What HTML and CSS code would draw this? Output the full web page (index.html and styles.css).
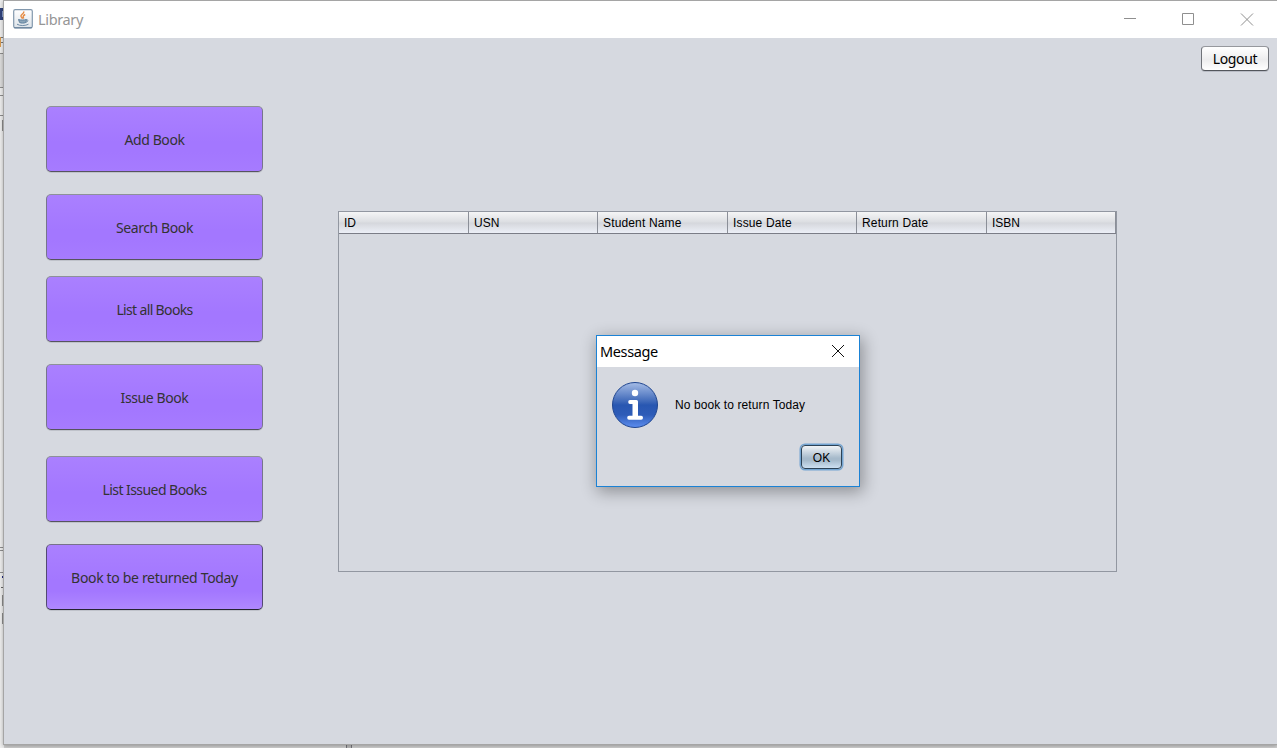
FILE: index.html
```html
<!DOCTYPE html>
<html lang="en">
<head>
<meta charset="utf-8">
<title>Library</title>
<link rel="stylesheet" href="styles.css">
</head>
<body>
<div class="desktop">
  <svg class="behind" width="4" height="748" viewBox="0 0 4 748" shape-rendering="crispEdges">
    <rect width="4" height="748" fill="#eeeeee"/>
    <rect y="8" width="4" height="12" fill="#31437c"/><rect x="2" y="11" width="2" height="6" fill="#8aa0d0"/>
    <rect y="37" width="1" height="10" fill="#d99a4e"/><rect x="1" y="37" width="3" height="1" fill="#777"/><rect x="1" y="42" width="2" height="1" fill="#777"/>
    <path d="M0 53.5h4M0 87.500h4M0 95.500h4M0 115.500h4M0 550.500h4M0 547.500h4M0 572.500h4" stroke="#8d8d8d"/>
    <rect y="54" width="4" height="33" fill="#dcdcdc"/>
    <path d="M4 120.500H2.500V130.500H4M4 595.500H2.500V605.500H4M4 613.500H2.500V623.500H4" fill="none" stroke="#8d8d8d"/>
    <rect x="3" y="561" width="1" height="4" fill="#c99b62"/><rect x="2" y="576" width="2" height="2" fill="#222a80"/><rect x="3" y="579" width="1" height="8" fill="#444"/><rect x="1" y="587" width="3" height="1" fill="#666"/>
  </svg>
  <div class="splitter"></div>
  <main class="window">
    <header class="titlebar">
      <svg class="java" width="20" height="20" viewBox="0 0 20 20">
        <defs><linearGradient id="jb" x1="0" y1="0" x2="0" y2="1"><stop offset="0" stop-color="#fff"/><stop offset="1" stop-color="#dde3e9"/></linearGradient></defs>
        <rect x=".7" y=".7" width="18.600" height="18.100" rx="1.500" fill="url(#jb)" stroke="#8298ad" stroke-width="1.200"/>
        <path d="M1 18.800h18" stroke="#617d97"/>
        <path d="M10.500 2.500c1.500 2-3.500 3-2.500 5 .4.900 1.200 1.300 1.500 2.200M12.200 5.500c-2.700 1.200-2.200 2.300-1.400 4" fill="none" stroke="#e58a42" stroke-width="1.400"/>
        <path d="M5.500 10.500c2 .7 5.500.7 8 0l-.7 3c-2 .8-4.500.8-6.200 0z" fill="#8da6ba" stroke="#5e809e"/>
        <path d="M13.400 11c2.200-.6 2.200 1.900-.7 2.200M4 15.200c3 1.900 8.500 1.700 11.500 0" fill="none" stroke="#6f8ca6"/>
      </svg>
      <span class="caption">Library</span>
      <svg class="controls" width="132" height="14" viewBox="0 0 132 14" fill="none" stroke="#8f8f8f">
        <path d="M0 5.500h12M58.500 .5h11v11h-11z"/><path d="M117 .5l12 12M129 .5l-12 12"/>
      </svg>
    </header>
    <div class="content">
      <nav class="menu">
        <button class="item">Add Book</button>
        <button class="item">Search Book</button>
        <button class="item near tight">List all Books</button>
        <button class="item">Issue Book</button>
        <button class="item far snug">List Issued Books</button>
        <button class="item active">Book to be returned Today</button>
      </nav>
      <section class="table">
        <div class="head"><span>ID</span><span>USN</span><span class="wide">Student Name</span><span class="wide">Issue Date</span><span class="wide">Return Date</span><span>ISBN</span></div>
      </section>
      <button class="logout">Logout</button>
    </div>
  </main>
  <section class="dialog">
    <header class="dialog-title"><span>Message</span>
      <svg width="14" height="14" viewBox="0 0 14 14" stroke="#111"><path d="M1 1l12 12M13 1L1 13"/></svg>
    </header>
    <div class="dialog-main">
      <svg width="48" height="48" viewBox="0 0 48 48">
        <defs><linearGradient id="info" x1="0" y1="0" x2="0" y2="1"><stop offset="0" stop-color="#a5bce6"/><stop offset=".42" stop-color="#3f69b9"/><stop offset=".5" stop-color="#2857b1"/><stop offset=".72" stop-color="#2e5cb8"/><stop offset="1" stop-color="#5d8ef0"/></linearGradient></defs>
        <circle cx="24" cy="24" r="22.500" fill="url(#info)" stroke="#204690"/>
        <circle cx="24" cy="12" r="3.200" fill="#fff"/>
        <path d="M19 19h6.500q1.500 0 1.500 1.500v14.200h3.200q1.800 0 1.800 2t-1.800 2H18q-1.800 0-1.800-2t1.800-2h3.500V23H19q-1.800 0-1.800-2T19 19z" fill="#fff"/>
      </svg>
      <p>No book to return Today</p>
    </div>
    <div class="actions"><button class="ok">OK</button></div>
  </section>
</div>
</body>
</html>
```
FILE: styles.css
```css
* { box-sizing: border-box; }
body { margin: 0; overflow: hidden; background: #d1d1d1; }
button { padding: 0; margin: 0; white-space: nowrap; }
.desktop { position: relative; width: 1277px; height: 748px; padding-left: 3px; overflow: hidden; background: #d1d1d1; }
.behind { position: absolute; left: 0; top: 0; }
.splitter { position: absolute; left: 346px; top: 744px; width: 6px; height: 4px; border: solid #77777d; border-width: 0 1px; background: #bcbcbc; }
.window { position: relative; width: 1274px; height: 745px; border: solid #a5a5a5; border-width: 1px 0 1px 1px; background: #d6d9e0; box-shadow: 0 1px 4px rgba(0,0,0,.3); }
.titlebar { height: 37px; display: flex; align-items: center; padding: 0 21px 2px 9px; background: #fff; }
.java { margin-top: 1px; }
.caption { margin-left: 5px; font: 14.500px/20px "Noto Sans", sans-serif; letter-spacing: -.35px; color: #969696; }
.controls { margin-left: auto; margin-top: 2px; }
.content { display: flex; align-items: flex-start; }
.menu { width: 217px; margin: 68px 0 0 42px; display: flex; flex-direction: column; gap: 22px; }
.item { height: 66px; padding-top: 2px; border: 1px solid; border-color: #8d9199 #77758c #56545f #77758c; border-radius: 5px; background: linear-gradient(#aa80ff, #a377ff 55%, #a377ff 70%, #a67bff); box-shadow: 0 1px 0 rgba(100,105,115,.2); color: #333; font: 14px/20px "Noto Sans", sans-serif; letter-spacing: -.4px; }
.near { margin-top: -6px; }
.far { margin-top: 4px; }
.tight { letter-spacing: -.65px; }
.snug { letter-spacing: -.55px; }
.active { border-color: #77728b #534a72 #252432 #534a72; background: linear-gradient(#aa80ff, #a377ff 55%, #a377ff 72%, #af88ff); letter-spacing: -.33px; }
.table { width: 779px; height: 361px; margin: 173px 0 0 75px; border: 1px solid #9297a1; }
.head { height: 22px; display: grid; grid-template-columns: 130px 129px 130px 129px 130px 129px; border-bottom: 1px solid #7b7d87; background: linear-gradient(#f5f5f6, #dcdee2 48%, #d5d7dc 52%, #eceff7); font: 12px/22px "Liberation Sans", sans-serif; color: #000; }
.head span { height: 21px; padding-left: 5px; border-right: 1px solid #8b8f98; }
.head .wide { letter-spacing: .15px; }
.logout { width: 68px; height: 25px; margin: 8px 0 0 84px; border: 1px solid; border-color: #96989d #707379 #53565c; border-radius: 4px; background: linear-gradient(#fff, #ededee 55%, #fff); box-shadow: 0 1px 0 rgba(100,105,115,.25); color: #000; font: 14px/20px "Noto Sans", sans-serif; letter-spacing: -.35px; }
.dialog { position: absolute; left: 596px; top: 335px; width: 264px; height: 152px; border: 1px solid #1b82d5; background: #d6d9e0; box-shadow: 2px 4px 15px 1px rgba(0,0,0,.33); }
.dialog-title { height: 31px; display: flex; align-items: center; justify-content: space-between; padding: 0 14px 2px 3px; background: #fff; color: #000; font: 14.500px/20px "Noto Sans", sans-serif; letter-spacing: -.38px; }
.dialog-main { height: 48px; margin: 14px 0 0 14px; display: flex; align-items: center; gap: 16px; }
.dialog-main p { margin: 0; font: 12px/16px "Liberation Sans", sans-serif; letter-spacing: .1px; color: #000; white-space: nowrap; }
.actions { display: flex; justify-content: flex-end; margin: 16px 17px 0 0; }
.ok { width: 41px; height: 24px; padding-top: 1px; border: 1px solid #2c4256; border-radius: 4px; background: linear-gradient(#f1f4f7, #a6bacb 55%, #a6bacb 65%, #ccdff1); box-shadow: 0 0 0 1.500px #73a4d1; color: #000; font: 12px/16px "Liberation Sans", sans-serif; }
```
